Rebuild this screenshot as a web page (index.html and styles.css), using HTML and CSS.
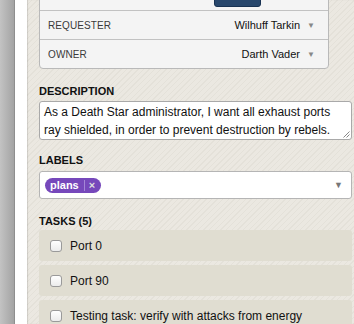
FILE: index.html
```html
<!DOCTYPE html>
<html>
<head>
<meta charset="utf-8">
<link rel="stylesheet" href="styles.css">
</head>
<body>
<div class="page">
  <div class="shade"></div>
  <div class="gutter"></div>
  <div class="main">
    <div class="props">
      <div class="row">
        <span class="key">STATE</span>
        <div class="state">
          <span class="btn-dark">Started</span>
          <span class="btn-faint">Finish</span>
        </div>
      </div>
      <div class="row">
        <span class="key">REQUESTER</span>
        <span class="val">Wilhuff Tarkin <span class="caret">&#9660;</span></span>
      </div>
      <div class="row last">
        <span class="key">OWNER</span>
        <span class="val">Darth Vader <span class="caret">&#9660;</span></span>
      </div>
    </div>

    <div class="section desc-sec">
      <div class="heading">DESCRIPTION</div>
      <div class="textarea">As a Death Star administrator, I want all exhaust ports ray shielded, in order to prevent destruction by rebels.
        <svg class="grip" width="7" height="7" viewBox="0 0 7 7"><path d="M6.5 0.5 L0.5 6.5 M6.5 3.5 L3.5 6.5" stroke="#888" stroke-width="1" fill="none"/></svg>
      </div>
    </div>

    <div class="section labels-sec">
      <div class="heading">LABELS</div>
      <div class="select">
        <span class="pill"><span class="pill-text">plans</span><span class="pill-sep"></span><span class="pill-x">&#215;</span></span>
        <span class="sel-caret">&#9660;</span>
      </div>
    </div>

    <div class="section tasks-sec">
      <div class="heading">TASKS (5)</div>
      <div class="tasks">
        <div class="task"><span class="check"></span><span>Port 0</span></div>
        <div class="task"><span class="check"></span><span>Port 90</span></div>
        <div class="task"><span class="check"></span><span>Testing task: verify with attacks from energy</span></div>
      </div>
    </div>
  </div>
</div>
</body>
</html>
```

FILE: styles.css
```css
html, body {
  margin: 0;
  padding: 0;
  height: 100%;
  overflow: hidden;
}
body {
  font-family: "Liberation Sans", Arial, sans-serif;
  color: #222;
}
.page {
  display: flex;
  height: 324px;
  width: 354px;
  overflow: hidden;
}
.shade {
  flex: 0 0 14px;
  background: linear-gradient(to right, #c3c3c3, #a3a3a3);
  border-right: 1px solid #8e8e8e;
}
.gutter {
  flex: 0 0 12px;
  background: #fff;
}
.main {
  flex: 1 1 auto;
  min-width: 0;
  padding-left: 12px;
  background-color: #ebe8e1;
  background-image: repeating-linear-gradient(135deg, #ebe8e1 0px, #ebe8e1 3px, #e4e1d9 3px, #e4e1d9 4px);
  box-shadow: inset 1px 0 1px rgba(0,0,0,0.12);
}
.props {
  width: 288px;
  margin-top: -19px;
  background: #f4f4f4;
  border: 1px solid #b9b9b9;
  border-radius: 0 0 4px 4px;
}
.row {
  height: 28px;
  border-bottom: 1px solid #c2c2c2;
  display: flex;
  align-items: center;
  justify-content: space-between;
  padding: 0 8px;
}
.row.last { border-bottom: none; }
.key {
  font-size: 10px;
  color: #3a3a3a;
  letter-spacing: 0.1px;
}
.val {
  font-size: 11px;
  color: #111;
  margin-right: 5px;
}
.caret {
  font-size: 8px;
  color: #888;
  margin-left: 4px;
  position: relative;
  top: -1px;
}
.state {
  display: flex;
  align-items: center;
  margin-right: 21px;
  gap: 9px;
}
.btn-dark {
  background: #28476c;
  border: 1px solid #183252;
  color: #fff;
  font-size: 11px;
  padding: 4px 6px;
  border-radius: 3px;
  width: 33px;
  text-align: center;
}
.btn-faint {
  font-size: 11px;
  color: #ddd;
}
.section { width: 313px; }
.heading {
  font-size: 11px;
  font-weight: bold;
  line-height: 13px;
  color: #111;
}
.desc-sec { margin-top: 16px; }
.textarea {
  position: relative;
  margin-top: 3px;
  background: #fff;
  border: 1px solid #a9a9a9;
  border-radius: 3px;
  font-size: 12px;
  line-height: 18px;
  padding: 1px 4px 0 4px;
  box-sizing: border-box;
  height: 39px;
  color: #111;
}
.grip {
  position: absolute;
  right: 1px;
  bottom: 1px;
}
.labels-sec { margin-top: 14px; }
.select {
  margin-top: 4px;
  height: 28px;
  box-sizing: border-box;
  background: #fff;
  border: 1px solid #b5b5b5;
  border-radius: 3px;
  display: flex;
  align-items: center;
  justify-content: space-between;
  padding: 0 6px 0 5px;
}
.pill {
  display: flex;
  align-items: center;
  height: 15px;
  background: #7648bb;
  border-radius: 8px;
  padding: 0 6px 0 5px;
  color: #fff;
  font-size: 11px;
  font-weight: bold;
}
.pill-sep {
  width: 1px;
  height: 11px;
  background: #a486d6;
  margin: 0 4px 0 5px;
}
.pill-x {
  font-size: 11px;
  color: #ddd;
}
.sel-caret {
  font-size: 9px;
  color: #777;
  margin-right: 2px;
}
.tasks-sec { margin-top: 16px; }
.tasks {
  margin-top: 2px;
  display: flex;
  flex-direction: column;
  gap: 4px;
}
.task {
  height: 31px;
  background: #e0ddd1;
  border-radius: 3px;
  display: flex;
  align-items: center;
  padding-left: 11px;
  font-size: 12px;
  color: #111;
}
.check {
  width: 10px;
  height: 10px;
  border: 1px solid #9a9a9a;
  border-radius: 3px;
  background: linear-gradient(#fff, #ececec);
  margin-right: 8px;
  flex: 0 0 auto;
}
```
